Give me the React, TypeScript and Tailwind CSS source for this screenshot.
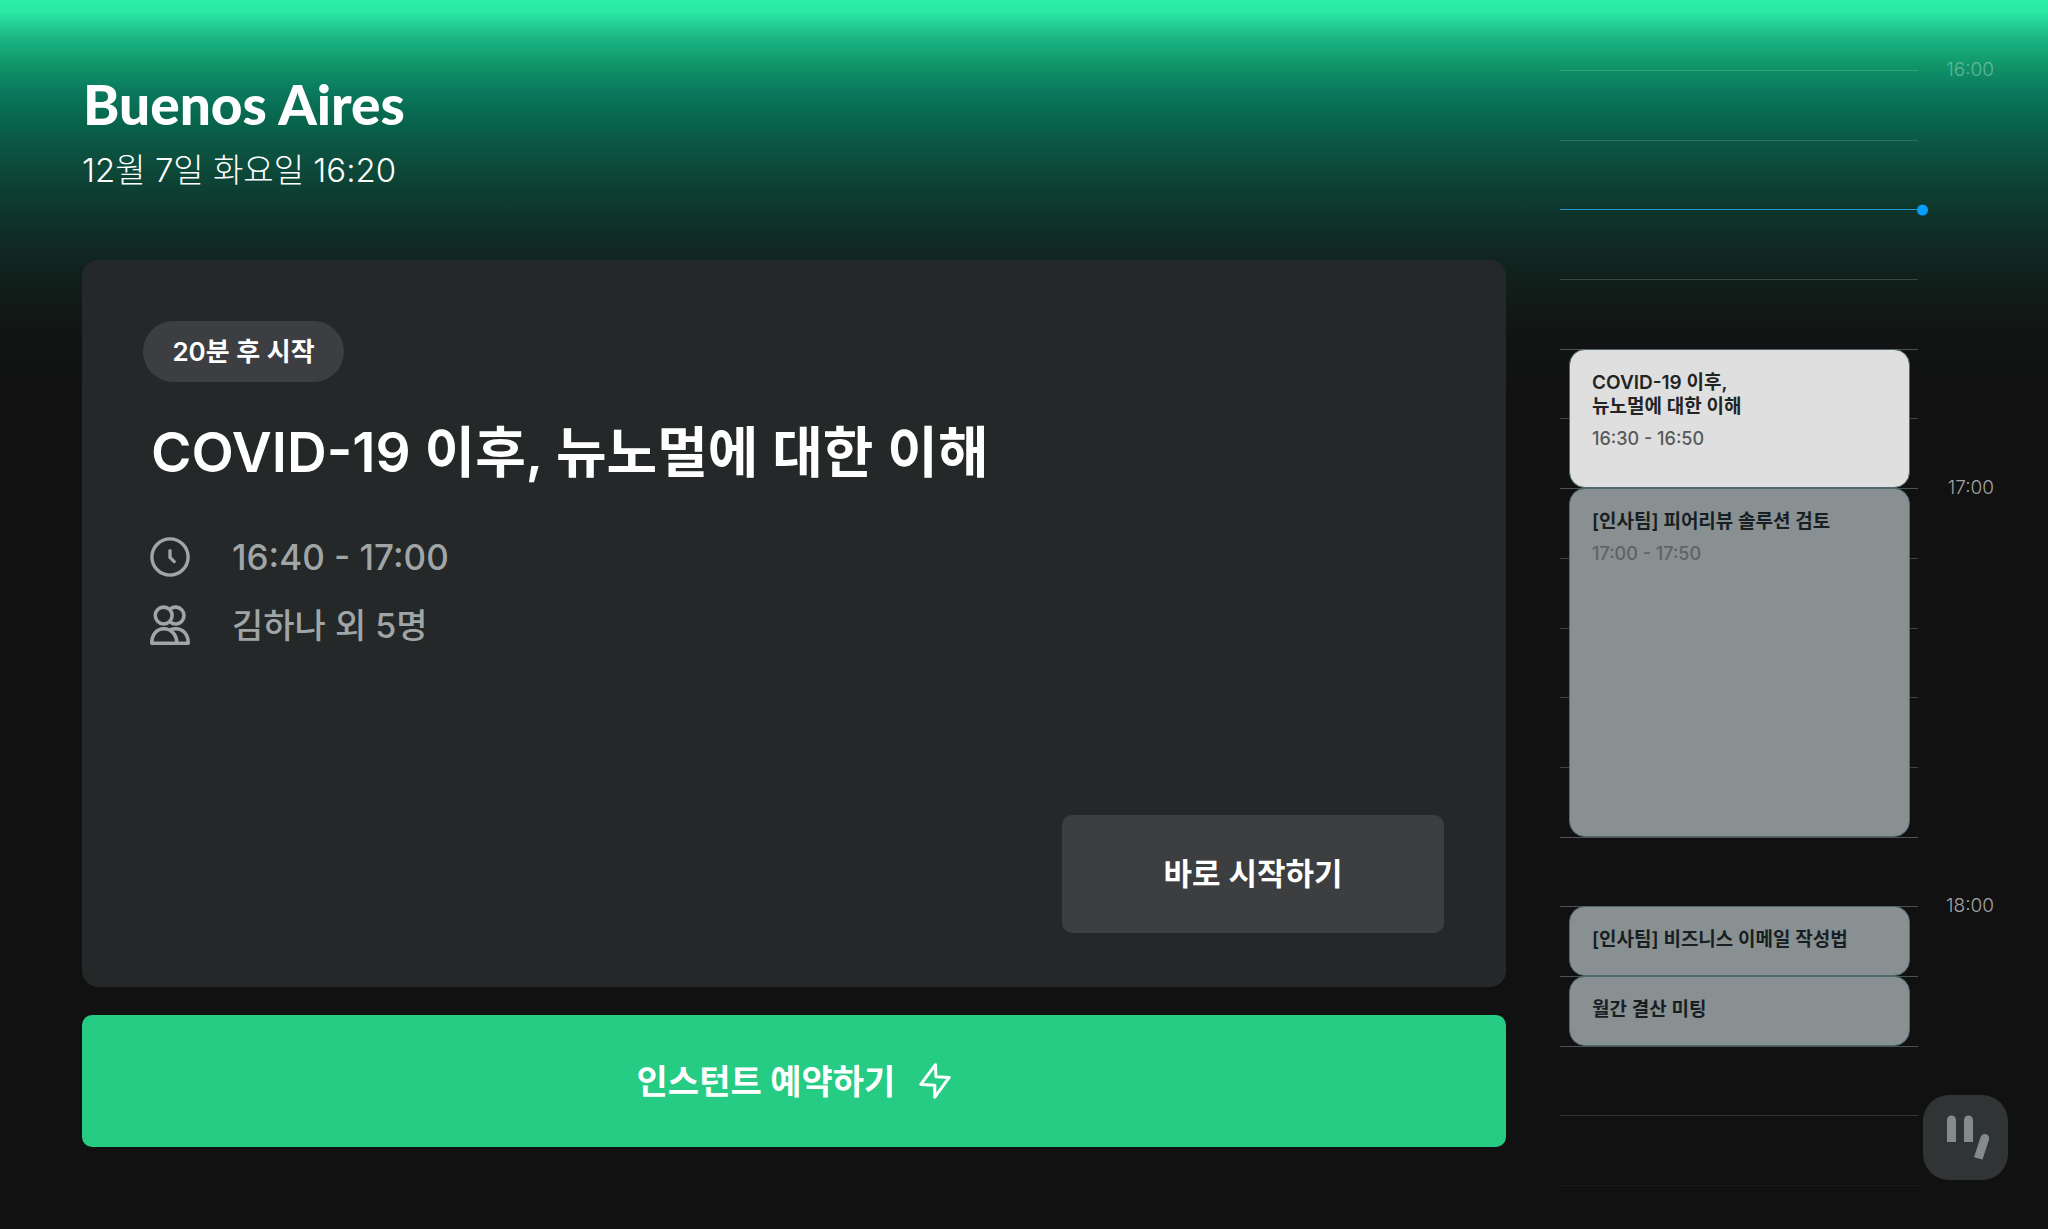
import type { ReactNode } from "react";

interface Meeting {
  title: string[];
  time?: string;
  active?: boolean;
  slot: string; // grid row placement, one row = 10 minutes
}

const MEETINGS: Meeting[] = [
  {
    title: ["COVID-19 이후,", "뉴노멀에 대한 이해"],
    time: "16:30 - 16:50",
    active: true,
    slot: "row-[5/span_2]",
  },
  {
    title: ["[인사팀] 피어리뷰 솔루션 검토"],
    time: "17:00 - 17:50",
    slot: "row-[7/span_5]",
  },
  { title: ["[인사팀] 비즈니스 이메일 작성법"], slot: "row-[13/span_1]" },
  { title: ["월간 결산 미팅"], slot: "row-[14/span_1]" },
];

// 17 ruler lines; the last one closes the grid
const LINES = [
  { row: "row-start-1", color: "bg-white/15" },
  { row: "row-start-2", color: "bg-white/15" },
  { row: "row-start-3", color: "bg-[#2196d3]", now: true },
  { row: "row-start-4", color: "bg-[#3c4644]" },
  { row: "row-start-5", color: "bg-[#4a5252]" },
  { row: "row-start-6", color: "bg-[#3f4444]" },
  { row: "row-start-7", color: "bg-[#4a5252]" },
  { row: "row-start-8", color: "bg-[#3f4444]" },
  { row: "row-start-9", color: "bg-[#3f4444]" },
  { row: "row-start-10", color: "bg-[#3f4444]" },
  { row: "row-start-11", color: "bg-[#3f4444]" },
  { row: "row-start-12", color: "bg-[#4f5555]" },
  { row: "row-start-[13]", color: "bg-[#4a5252]" },
  { row: "row-start-[14]", color: "bg-[#4a5252]" },
  { row: "row-start-[15]", color: "bg-[#4a5252]" },
  { row: "row-start-[16]", color: "bg-[#333535]" },
  { row: "row-start-[17]", color: "bg-[#1b1b1b]" },
];

const HOURS = [
  { label: "16:00", row: "row-start-1", color: "text-white/35" },
  { label: "17:00", row: "row-start-7", color: "text-[#a3a3a3]" },
  { label: "18:00", row: "row-start-[13]", color: "text-[#a3a3a3]" },
];

function ClockIcon() {
  return (
    <svg viewBox="0 0 38 38" className="size-10" fill="none" stroke="currentColor" strokeWidth="3.2" aria-hidden="true">
      <circle cx="19" cy="19" r="17.2" />
      <path d="M19 13v6.4l4 4" strokeLinecap="round" strokeLinejoin="round" />
    </svg>
  );
}

function PeopleIcon() {
  return (
    <svg viewBox="0 0 38 38" className="size-10" fill="none" stroke="currentColor" strokeWidth="3.4" strokeLinejoin="round" aria-hidden="true">
      <circle cx="13" cy="10" r="8" />
      <path d="M19.5 3.6A8 8 0 1 1 19.5 16.4" />
      <path d="M1.7 36.3C1.7 28 6.4 22.5 13.2 22.5S25.5 28 25.5 36.3Z" />
      <path d="M19 23.6C21 22.8 22.6 22.5 24.4 22.5 31.6 22.5 36.3 28 36.3 36.3H25.5" />
    </svg>
  );
}

function BoltIcon() {
  return (
    <svg viewBox="0 0 32 36" className="h-9 w-8" fill="none" stroke="currentColor" strokeWidth="3" strokeLinejoin="round" aria-hidden="true">
      <path d="M16.5 1.7 1.8 21.4 15.8 22.2V34.2L30.2 14.4 16.9 13.7Z" />
    </svg>
  );
}

function DetailRow({ icon, children }: { icon: ReactNode; children: ReactNode }) {
  return (
    <div className="flex h-[68px] items-center gap-[42px]">
      {icon}
      {children}
    </div>
  );
}

function Timeline() {
  return (
    <aside
      aria-label="일정"
      className="grid w-[434px] shrink-0 grid-cols-[9px_1fr_8px_27px_49px] grid-rows-[repeat(16,minmax(0,1fr))_1px] pt-[70px] pb-[43px]"
    >
      {LINES.map((line) => (
        <div key={line.row} className={`relative col-[1/span_3] h-px ${line.row} ${line.color}`}>
          {line.now && (
            <span className="absolute top-1/2 -right-[10px] size-[11px] -translate-y-1/2 rounded-full bg-[#069ffd]" />
          )}
        </div>
      ))}
      {MEETINGS.map((m) => (
        <article
          key={m.slot}
          className={`z-10 col-start-2 flex flex-col rounded-2xl border border-[#4f6a6e] px-[22px] pt-[21px] pb-4 ${m.slot} ${
            m.active ? "bg-[#dfdfdf]" : "bg-[#889092]"
          }`}
        >
          <h3
            className={`text-[19px] leading-6 font-semibold whitespace-nowrap ${
              m.active ? "text-[#222424]" : "text-[#181f22]"
            }`}
          >
            {m.title.map((t) => (
              <span key={t} className="block">{t}</span>
            ))}
          </h3>
          {m.time && (
            <p className={`mt-2 text-[18px] leading-6 font-medium ${m.active ? "text-[#555a5b]" : "text-[#5c6466]"}`}>
              {m.time}
            </p>
          )}
        </article>
      ))}
      {HOURS.map((h) => (
        <time
          key={h.label}
          className={`col-start-5 -mt-3 text-right text-[19px] leading-6 font-light ${h.row} ${h.color}`}
        >
          {h.label}
        </time>
      ))}
    </aside>
  );
}

export default function App() {
  return (
    <div className="relative flex min-h-screen gap-[54px] bg-[#111111] bg-[linear-gradient(to_bottom,#2ceeaa_0px,#2ae8a5_12px,#1bb583_38px,#109468_66px,#0a7a5e_90px,#07694f_115px,#0c5441_148px,#0d3f32_190px,#0f2e26_230px,#11201c_275px,#111514_330px,#111111_400px)] pr-[54px] pl-[82px] font-[Inter,'Noto_Sans_CJK_KR',sans-serif] text-white">
      <main className="flex min-w-0 flex-1 flex-col pb-[82px]">
        <header className="flex h-[260px] flex-col pt-[72px]">
          <h1 className="pl-px font-[Lato,sans-serif] text-[55px] leading-[64px] font-black">Buenos Aires</h1>
          <p className="mt-0.5 text-[33px] leading-[64px] font-light">12월 7일 화요일 16:20</p>
        </header>

        <section className="flex flex-1 flex-col rounded-2xl bg-[#242828] pr-[62px] pl-[61px] pt-[61px] pb-[54px]">
          <span className="flex h-[61px] w-[201px] items-center justify-center rounded-full bg-[#3c3e41] text-[26px] font-semibold">
            20분 후 시작
          </span>
          <h2 className="mt-7 pl-2 text-[55px] leading-[84px] font-semibold">
            COVID-19 이후, 뉴노멀에 대한 이해
          </h2>
          <div className="mt-[29px] pl-[7px] font-medium text-[#a0a5a7]">
            <DetailRow icon={<ClockIcon />}>
              <span className="text-[35px]">16:40 - 17:00</span>
            </DetailRow>
            <DetailRow icon={<PeopleIcon />}>
              <span className="text-[34px]">김하나 외 5명</span>
            </DetailRow>
          </div>
          <button
            type="button"
            className="mt-auto h-[118px] w-[382px] self-end rounded-[10px] bg-[#3c3e40] text-[31px] font-semibold"
          >
            바로 시작하기
          </button>
        </section>

        <button
          type="button"
          className="mt-7 flex h-[132px] shrink-0 items-center justify-center gap-6 rounded-[10px] bg-[#26cc83] text-[34px] font-semibold"
        >
          인스턴트 예약하기
          <BoltIcon />
        </button>
      </main>

      <Timeline />

      <button
        type="button"
        aria-label="메뉴"
        className="absolute right-10 bottom-[49px] z-20 size-[85px] rounded-[26px] bg-[#313434]"
      >
        <svg viewBox="0 0 85 85" className="size-full" fill="#838b8d" aria-hidden="true">
          <path d="M24 47V25a4.5 4.5 0 0 1 9 0v22Z" />
          <path d="M41 47V25a4.5 4.5 0 0 1 9 0v22Z" />
          <path d="M51 62.3 57.6 42a4.4 4.4 0 0 1 8.4 2.7L59.5 64.5Z" />
        </svg>
      </button>
    </div>
  );
}
